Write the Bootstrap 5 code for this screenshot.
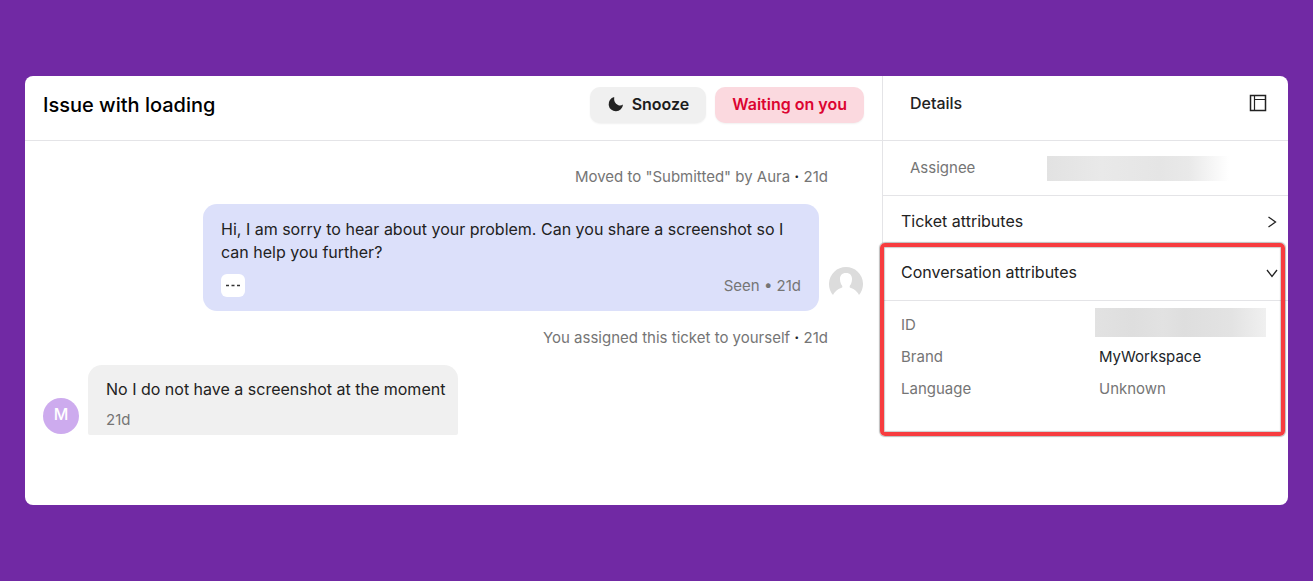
<!DOCTYPE html>
<html lang="en">
<head>
<meta charset="utf-8">
<meta name="viewport" content="width=device-width, initial-scale=1">
<title>Issue with loading</title>
<link href="https://cdn.jsdelivr.net/npm/bootstrap@5.3.0/dist/css/bootstrap.min.css" rel="stylesheet">
<style>
  body { background: #7129a4; font-family: Inter, "Liberation Sans", sans-serif; font-size: 16px; font-optical-sizing: none; line-height: 23px; color: #222; padding: 76px 25px; }
  .inbox { background: #fff; border-radius: 8px; min-height: calc(100vh - 152px); }
  .line { border-color: #e4e4e7 !important; }
  .pane-head { height: 65px; padding: 0 18px 6px; gap: 9px; }
  .ticket-title { font-size: 20px; line-height: 24px; font-weight: 500; color: #000; }
  .action { height: 36px; border: 0; border-radius: 10px; padding: 0 17px 2px; font-size: 16px; font-weight: 600; line-height: 20px; box-shadow: 0 1px 2px rgba(0,0,0,.06); }
  .action-snooze { background: #f0f0f0; color: #1c1c1c; }
  .action-wait { background: #fbd9df; color: #dc0431; }
  .muted { color: #757575; }
  .event { font-size: 15px; line-height: 24px; padding-right: 35px; }
  .thread { padding: 24px 19px 24px 18px; }
  .thread-row { margin-top: 15px; }
  .bubble { border-radius: 14px; padding: 14px 18px; }
  .bubble-agent { background: #dce0fa; max-width: 616px; }
  .bubble-agent p { margin-bottom: 10px; }
  .bubble-user { background: #f0f0f0; border-radius: 14px 14px 2px 2px; padding: 13px 13px 4px 18px; }
  .bubble-user p { margin-bottom: 7px; }
  .stamp { font-size: 15px; }
  .more { width: 24px; height: 23px; border: 0; border-radius: 6px; background: #fff; }
  .agent-avatar { margin: 0 0 10px 8px; }
  .avatar-m { width: 36px; height: 36px; background: #cdabee; color: #fff; font-weight: 500; padding-bottom: 3px; margin: 0 9px 1px 0; }
  .side { flex: 0 0 406px; }
  .side-head { height: 65px; padding: 0 21px 10px 27px; font-weight: 500; }
  .assignee { height: 55px; padding: 0 59px 0 27px; font-size: 15px; }
  .assignee .muted { padding-bottom: 2px; }
  .fade-bar { width: 182px; height: 25px; background: linear-gradient(90deg, #e2e2e2, #e9e9e9 30%, #e5e5e5 62%, #e9e9e9 78%, #fff); }
  .id-bar { width: 171px; height: 29px; background: linear-gradient(90deg, #e2e2e2, #dedede 22%, #e2e2e2 40%, #dedede 52%, #e3e3e3 80%, #f0f0f0); }
  .group-toggle { border: 0; background: none; padding: 0 10px 0 18px; height: 51px; width: 100%; text-align: left; color: #222; }
  .conversation { height: 189px; padding-left: 1px; }
  .conversation .group-toggle { height: 54px; border-bottom: 1px solid #e4e4e7; padding-bottom: 2px; }
  .highlight { inset: -4px 3px 0 -2px; border: 4px solid #f73c3f; border-radius: 5px; box-shadow: 0 0 1px 1px rgba(90,90,90,.4), inset 0 0 1px 1px rgba(90,90,90,.3); pointer-events: none; }
  .facts { padding: 7px 22px 0 18px; font-size: 15px; line-height: 32px; grid-template-columns: 194px 1fr; }
  .facts dt { font-weight: 400; padding-top: 1px; margin-bottom: -1px; }
  .facts dd { padding: 1px 0 0 4px; margin-bottom: -1px; }
</style>
</head>
<body>
<main class="inbox d-flex">
  <section class="flex-grow-1">
    <header class="pane-head line border-bottom d-flex align-items-center">
      <h1 class="ticket-title m-0 me-auto">Issue with loading</h1>
      <button type="button" class="action action-snooze d-flex align-items-center">
        <svg class="me-2" width="17" height="16" viewBox="0 0 17 16" aria-hidden="true"><path d="M7.200 1A7.200 7.200 0 1 0 16 8.500Q13.500 10.300 11 9Q6.500 7 7.200 1Z" fill="#222"/></svg>Snooze
      </button>
      <button type="button" class="action action-wait">Waiting on you</button>
    </header>
    <div class="thread">
      <p class="event muted text-end m-0">Moved to "Submitted" by Aura <b class="text-dark">·</b> 21d</p>
      <div class="thread-row d-flex justify-content-end align-items-end">
        <div class="bubble bubble-agent flex-grow-1">
          <p>Hi, I am sorry to hear about your problem. Can you share a screenshot so I can help you further?</p>
          <div class="d-flex justify-content-between align-items-center">
            <button type="button" class="more p-0 d-flex align-items-center justify-content-center" aria-label="More">
              <svg width="16" height="4" viewBox="0 0 16 4"><path d="M1 1.500h3M6.500 1.500h3M12 1.500h3" stroke="#333" stroke-width="1.500"/></svg>
            </button>
            <span class="muted stamp">Seen • 21d</span>
          </div>
        </div>
        <svg class="agent-avatar flex-shrink-0" width="36" height="36" viewBox="0 0 36 36" role="img" aria-label="Agent"><path d="M6 30A17 17 0 1 1 32 30Q29 24.500 24 23C21.500 22.200 23 20.500 24 19C26 14 25.500 8 19 8S12 14 14 19C15 20.500 16.500 22.200 14 23Q9 24.500 6 30Z" fill="#dcdcdc"/></svg>
      </div>
      <p class="event thread-row muted text-end mb-0">You assigned this ticket to yourself <b class="text-dark">·</b> 21d</p>
      <div class="thread-row d-flex align-items-end">
        <div class="avatar-m rounded-circle d-flex align-items-center justify-content-center">M</div>
        <div class="bubble bubble-user">
          <p>No I do not have a screenshot at the moment</p>
          <span class="muted stamp d-block">21d</span>
        </div>
      </div>
    </div>
  </section>
  <aside class="side">
    <div class="line border-start">
      <header class="side-head line border-bottom d-flex align-items-center justify-content-between">
        <span>Details</span>
        <svg width="18" height="18" viewBox="0 0 18 18" aria-hidden="true"><path d="M1.500 1.500h15v15h-15z" fill="none" stroke="#222" stroke-width="1.500"/><path d="M5.500 1.500v15M5.500 5.500h11" fill="none" stroke="#222" stroke-width="1.200"/></svg>
      </header>
      <div class="assignee line border-bottom d-flex align-items-center">
        <span class="muted me-auto">Assignee</span>
        <span class="fade-bar"></span>
      </div>
      <button type="button" class="group-toggle d-flex align-items-center justify-content-between">Ticket attributes
        <svg width="12" height="12" viewBox="0 0 12 12" aria-hidden="true"><path d="M2.500 1L9.500 6L2.500 11" fill="none" stroke="#222" stroke-width="1.300"/></svg>
      </button>
    </div>
    <section class="conversation position-relative">
      <button type="button" class="group-toggle d-flex align-items-center justify-content-between" aria-expanded="true">Conversation attributes
        <svg width="12" height="12" viewBox="0 0 12 12" aria-hidden="true"><path d="M1 3L6 9.500L11 3" fill="none" stroke="#222" stroke-width="1.300"/></svg>
      </button>
      <dl class="facts d-grid m-0 muted">
        <dt>ID</dt><dd class="m-0 p-0"><span class="id-bar d-block"></span></dd>
        <dt>Brand</dt><dd class="text-dark">MyWorkspace</dd>
        <dt>Language</dt><dd>Unknown</dd>
      </dl>
      <div class="highlight position-absolute"></div>
    </section>
  </aside>
</main>
<script src="https://cdn.jsdelivr.net/npm/bootstrap@5.3.0/dist/js/bootstrap.bundle.min.js"></script>
</body>
</html>
